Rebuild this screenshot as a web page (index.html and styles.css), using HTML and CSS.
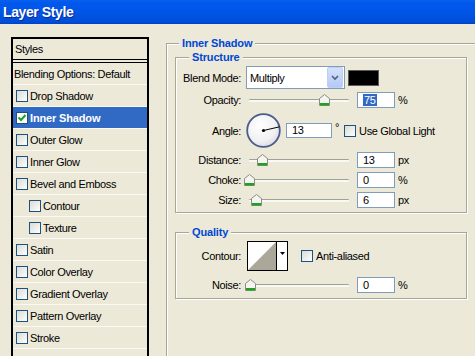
FILE: index.html
```html
<!DOCTYPE html>
<html>
<head>
<meta charset="utf-8">
<title>Layer Style</title>
<link rel="stylesheet" href="styles.css">
</head>
<body>
<div class="window">
  <div class="titlebar"><span class="title">Layer Style</span></div>
  <div class="content">
    <div class="stylelist">
      <div class="list-head">Styles</div>
      <div class="list-item plain">Blending Options: Default</div>
      <div class="list-item"><span class="cb"></span>Drop Shadow</div>
      <div class="list-item selected"><span class="cb checked"><svg viewBox="0 0 10 10" width="10" height="10"><path d="M1.5 4.5 L4 7 L8.5 2" fill="none" stroke="#21A121" stroke-width="2"/></svg></span>Inner Shadow</div>
      <div class="list-item"><span class="cb"></span>Outer Glow</div>
      <div class="list-item"><span class="cb"></span>Inner Glow</div>
      <div class="list-item"><span class="cb"></span>Bevel and Emboss</div>
      <div class="list-item indent"><span class="cb"></span>Contour</div>
      <div class="list-item indent"><span class="cb"></span>Texture</div>
      <div class="list-item"><span class="cb"></span>Satin</div>
      <div class="list-item"><span class="cb"></span>Color Overlay</div>
      <div class="list-item"><span class="cb"></span>Gradient Overlay</div>
      <div class="list-item"><span class="cb"></span>Pattern Overlay</div>
      <div class="list-item"><span class="cb"></span>Stroke</div>
      <div class="list-item empty"></div>
    </div>

    <div class="settings">
      <fieldset class="group outer">
        <legend>Inner Shadow</legend>
        <div class="outer-body">
          <fieldset class="group sub">
            <legend>Structure</legend>
            <div class="rows structure-rows">
              <div class="row row-select">
                <span class="lbl">Blend Mode:</span>
                <div class="select">
                  <span class="select-text">Multiply</span>
                  <span class="select-btn"><svg viewBox="0 0 8 6" width="8" height="6"><path d="M1 1 L4 4 L7 1" fill="none" stroke="#4D6185" stroke-width="1.6"/></svg></span>
                </div>
                <span class="swatch"></span>
              </div>
              <div class="row row-field">
                <span class="lbl">Opacity:</span>
                <div class="slider"><span class="track"></span><svg class="thumb" style="left:75px" viewBox="0 0 11 12" width="11" height="12"><path d="M0.5 4.5 L5.5 0.5 L10.5 4.5 L10.5 11.5 L0.5 11.5 Z" fill="#F4F4F0" stroke="#8C8C84"/><rect x="1" y="9" width="9" height="2.5" fill="#21A121"/></svg></div>
                <span class="num"><span class="sel">75</span></span>
                <span class="unit">%</span>
              </div>
              <div class="row row-angle">
                <span class="lbl">Angle:</span>
                <svg class="dial" viewBox="0 0 35 35" width="35" height="35">
                  <defs><radialGradient id="dg" cx="0.4" cy="0.35" r="0.7"><stop offset="0" stop-color="#FFFFFF"/><stop offset="0.7" stop-color="#F0F0F2"/><stop offset="1" stop-color="#D8D8E0"/></radialGradient></defs>
                  <circle cx="17.5" cy="17.5" r="16.3" fill="url(#dg)" stroke="#4A5C8C" stroke-width="1.8"/>
                  <line x1="17.5" y1="17.5" x2="33.5" y2="13.8" stroke="#000" stroke-width="1"/>
                  <circle cx="17.5" cy="17.5" r="1.6" fill="#000"/>
                </svg>
                <span class="num angle-num">13</span>
                <span class="unit deg">°</span>
                <span class="cb gl"></span><span class="cb-label">Use Global Light</span>
              </div>
              <div class="row row-field">
                <span class="lbl">Distance:</span>
                <div class="slider"><span class="track"></span><svg class="thumb" style="left:13px" viewBox="0 0 11 12" width="11" height="12"><path d="M0.5 4.5 L5.5 0.5 L10.5 4.5 L10.5 11.5 L0.5 11.5 Z" fill="#F4F4F0" stroke="#8C8C84"/><rect x="1" y="9" width="9" height="2.5" fill="#21A121"/></svg></div>
                <span class="num">13</span>
                <span class="unit">px</span>
              </div>
              <div class="row row-field">
                <span class="lbl">Choke:</span>
                <div class="slider"><span class="track"></span><svg class="thumb" style="left:0px" viewBox="0 0 11 12" width="11" height="12"><path d="M0.5 4.5 L5.5 0.5 L10.5 4.5 L10.5 11.5 L0.5 11.5 Z" fill="#F4F4F0" stroke="#8C8C84"/><rect x="1" y="9" width="9" height="2.5" fill="#21A121"/></svg></div>
                <span class="num">0</span>
                <span class="unit">%</span>
              </div>
              <div class="row row-field">
                <span class="lbl">Size:</span>
                <div class="slider"><span class="track"></span><svg class="thumb" style="left:7px" viewBox="0 0 11 12" width="11" height="12"><path d="M0.5 4.5 L5.5 0.5 L10.5 4.5 L10.5 11.5 L0.5 11.5 Z" fill="#F4F4F0" stroke="#8C8C84"/><rect x="1" y="9" width="9" height="2.5" fill="#21A121"/></svg></div>
                <span class="num">6</span>
                <span class="unit">px</span>
              </div>
            </div>
          </fieldset>

          <fieldset class="group sub quality">
            <legend>Quality</legend>
            <div class="rows quality-rows">
              <div class="row row-contour">
                <span class="lbl">Contour:</span>
                <div class="contour">
                  <svg class="contour-pic" viewBox="0 0 28 28" width="28" height="28" preserveAspectRatio="none"><rect width="28" height="28" fill="#fff"/><path d="M0 28 L28 0 L28 28 Z" fill="#ACA899"/></svg>
                  <span class="contour-arrow"><svg viewBox="0 0 5 3" width="5" height="3"><path d="M0 0 L5 0 L2.5 3 Z" fill="#000"/></svg></span>
                </div>
                <span class="cb aa"></span><span class="cb-label">Anti-aliased</span>
              </div>
              <div class="row row-field noise-row">
                <span class="lbl">Noise:</span>
                <div class="slider"><span class="track"></span><svg class="thumb" style="left:1px" viewBox="0 0 11 12" width="11" height="12"><path d="M0.5 4.5 L5.5 0.5 L10.5 4.5 L10.5 11.5 L0.5 11.5 Z" fill="#F4F4F0" stroke="#8C8C84"/><rect x="1" y="9" width="9" height="2.5" fill="#21A121"/></svg></div>
                <span class="num">0</span>
                <span class="unit">%</span>
              </div>
            </div>
          </fieldset>
        </div>
      </fieldset>
    </div>
  </div>
</div>
</body>
</html>
```
FILE: styles.css
```css
* { box-sizing: border-box; }
html, body { margin: 0; padding: 0; }
body {
  width: 475px;
  height: 356px;
  overflow: hidden;
  background: #ECE9D8;
  font-family: "Liberation Sans", Arial, sans-serif;
  font-size: 11px;
  letter-spacing: -0.35px;
  color: #000;
}
.window {
  width: 475px;
  height: 356px;
  overflow: hidden;
  display: flex;
  flex-direction: column;
}
.titlebar {
  height: 24px;
  flex: none;
  display: flex;
  align-items: center;
  padding: 0 0 1px 3px;
  background: linear-gradient(#0A60EC 0%, #0058EE 12%, #0055E5 55%, #004DD8 90%, #0042C4 100%);
}
.title {
  color: #fff;
  font-weight: bold;
  font-size: 14px;
  letter-spacing: -0.4px;
  text-shadow: 1px 1px 0 #0A2A9A;
}
.content {
  flex: 1;
  display: flex;
  align-items: flex-start;
  min-height: 0;
}

/* Left style list */
.stylelist {
  flex: none;
  margin: 13px 0 0 11px;
  width: 138px;
  height: 340px;
  border: 2px solid #000;
  border-bottom: none;
}
.list-head {
  height: 24px;
  line-height: 20px;
  padding-left: 2px;
  border-bottom: 4px double #000;
}
.list-item {
  height: 22px;
  display: flex;
  align-items: center;
  padding-left: 3px;
  border-bottom: 1px solid #FAF9F4;
  white-space: nowrap;
}
.list-item.plain { padding-left: 1px; }
.list-item.indent { padding-left: 16px; }
.list-item.selected {
  background: #316AC5;
  color: #fff;
  font-weight: bold;
  letter-spacing: -0.15px;
}
.cb {
  flex: none;
  width: 12px;
  height: 12px;
  margin-right: 2px;
  border: 1px solid #1C5180;
  background: linear-gradient(135deg, #DCDCD5 0%, #EEEEEA 55%, #FFFFFF 100%);
  display: flex;
  align-items: center;
  justify-content: center;
}
.cb.checked { background: #fff; }

/* Right settings */
.settings {
  flex: none;
  margin-left: 17px;
}
fieldset.group {
  margin: 0;
  padding: 0;
  min-width: 0;
  border: 1px solid #A7A69B;
  box-shadow: 1px 1px 0 #fff, inset 1px 1px 0 #fff;
}
fieldset.group > legend {
  padding: 0 3px;
  font-weight: bold;
  letter-spacing: -0.15px;
  color: #0046D5;
  line-height: 14px;
  background: #ECE9D8;
}
fieldset.outer {
  width: 316px;
  height: 330px;
  margin-top: 12px;
}
fieldset.outer > legend { margin-left: 12px; }
.outer-body { padding-left: 8px; }
fieldset.sub { width: 292px; }
fieldset.sub > legend { margin-left: 13px; }
fieldset.quality { margin-top: 12px; }

.rows {
  display: flex;
  flex-direction: column;
}
.structure-rows { padding: 2px 0 4px; }
.quality-rows { padding: 2px 0 5px; }
.row {
  display: flex;
  align-items: center;
  white-space: nowrap;
}
.lbl {
  flex: none;
  width: 65px;
  margin-right: 5px;
  text-align: right;
}
.row-select { height: 23px; }
.row-field { height: 16px; margin-top: 4px; }
.row-select + .row-field { margin-top: 3px; }
.row-angle { height: 35px; margin-top: 5px; }

.select {
  flex: none;
  width: 99px;
  height: 23px;
  border: 1px solid #7F9DB9;
  background: #fff;
  display: flex;
  align-items: center;
  justify-content: space-between;
  padding: 1px 1px 1px 3px;
}
.select-btn {
  width: 16px;
  height: 21px;
  border: 1px solid #BCD0F7;
  border-radius: 2px;
  background: linear-gradient(#D4E1FB, #B5C9F5);
  display: flex;
  align-items: center;
  justify-content: center;
}
.swatch {
  flex: none;
  width: 31px;
  height: 16px;
  margin-left: 3px;
  background: #000;
  border: 1px solid #5A5A5A;
}

.slider {
  position: relative;
  flex: none;
  width: 100px;
  height: 16px;
  margin-left: 3px;
}
.track {
  position: absolute;
  left: 0;
  right: 0;
  top: 7px;
  height: 3px;
  border-top: 1px solid #A0A096;
  border-radius: 1px;
  background: #F8F8F4;
}
.thumb {
  position: absolute;
  top: 2px;
  margin-left: -5px;
}
.num {
  flex: none;
  width: 38px;
  height: 16px;
  margin-left: 8px;
  padding-left: 5px;
  border: 1px solid #7F9DB9;
  background: #fff;
  line-height: 14px;
}
.sel {
  background: #316AC5;
  color: #fff;
  padding: 0 1px;
}
.unit { margin-left: 3px; }

.dial { flex: none; display: block; }
.angle-num {
  width: 46px;
  height: 15px;
  margin-left: 5px;
  line-height: 13px;
}
.deg { margin-left: 3px; align-self: flex-start; margin-top: 8px; }
.cb.gl { margin-left: 5px; margin-right: 3px; }
.cb.aa { margin-left: 13px; margin-right: 3px; }

.row-contour { height: 30px; }
.noise-row { margin-top: 6px; }
.contour {
  flex: none;
  width: 41px;
  height: 30px;
  margin-left: 1px;
  border: 1px solid #000;
  display: flex;
}
.contour-pic { display: block; flex: none; }
.contour-arrow {
  flex: 1;
  border-left: 1px solid #000;
  background: #fff;
  display: flex;
  align-items: flex-start;
  justify-content: center;
  padding-top: 10px;
}
```
